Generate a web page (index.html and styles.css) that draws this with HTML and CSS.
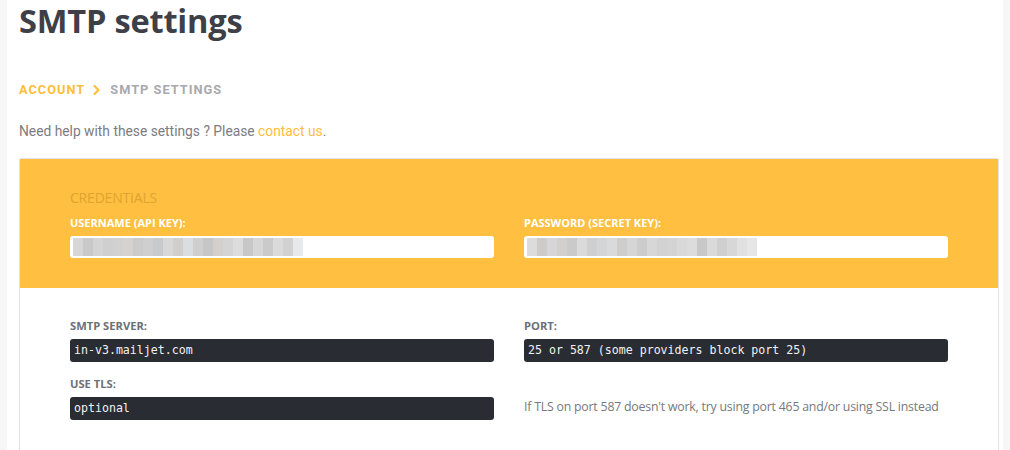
FILE: index.html
```html
<!DOCTYPE html>
<html>
<head>
<meta charset="utf-8">
<link rel="stylesheet" href="styles.css">
</head>
<body>
<div class="page">
  <h1 class="title">SMTP settings</h1>
  <nav class="crumbs">
    <span class="crumb-link">Account</span>
    <svg class="crumb-sep" width="7" height="10" viewBox="0 0 7 10"><polyline points="1.5,1 5.5,5 1.5,9" fill="none" stroke="#ffbd3c" stroke-width="2.2" stroke-linecap="round" stroke-linejoin="round"/></svg>
    <span class="crumb-current">SMTP settings</span>
  </nav>
  <p class="help">Need help with these settings ? Please <span class="link">contact us</span>.</p>
  <section class="card">
    <div class="card-head">
      <div class="section-title">CREDENTIALS</div>
      <div class="grid">
        <div class="field">
          <div class="label label-light">USERNAME (API KEY):</div>
          <div class="input">
            <div class="blur">
              <i style="background:#d6d6d6"></i><i style="background:#c9c9c9"></i><i style="background:#d4d4d4"></i><i style="background:#cfcfcf"></i><i style="background:#d1d1d1"></i><i style="background:#d6d2d0"></i><i style="background:#cbcbcb"></i><i style="background:#cfcfcf"></i><i style="background:#c9cacc"></i><i style="background:#d8d8d8"></i><i style="background:#d2cecb"></i><i style="background:#dadee1"></i><i style="background:#cfcfcf"></i><i style="background:#c6c6c6"></i><i style="background:#d2cfcc"></i><i style="background:#d4d4d4"></i><i style="background:#dcdcdc"></i><i style="background:#c7c7c7"></i><i style="background:#d6d6d6"></i><i style="background:#cacaca"></i><i style="background:#dadada"></i><i style="background:#d3d1cf"></i><i style="background:#e8e9ea"></i>
            </div>
          </div>
        </div>
        <div class="field">
          <div class="label label-light">PASSWORD (SECRET KEY):</div>
          <div class="input">
            <div class="blur">
              <i style="background:#dcdcdc"></i><i style="background:#cdcbca"></i><i style="background:#d6d6d8"></i><i style="background:#d3cfcc"></i><i style="background:#cacaca"></i><i style="background:#dadada"></i><i style="background:#cfcfcf"></i><i style="background:#d3d4d6"></i><i style="background:#d9dadb"></i><i style="background:#cfcdcb"></i><i style="background:#d6d6d6"></i><i style="background:#cccccc"></i><i style="background:#d7d7d7"></i><i style="background:#d2d2d2"></i><i style="background:#d4d4d4"></i><i style="background:#d9d9d9"></i><i style="background:#dcdcdc"></i><i style="background:#c8c8c8"></i><i style="background:#dadada"></i><i style="background:#cfcfcf"></i><i style="background:#d7d7d7"></i><i style="background:#e0e0e0"></i><i style="background:#e6e6e6"></i>
            </div>
          </div>
        </div>
      </div>
    </div>
    <div class="card-body">
      <div class="grid">
        <div class="field">
          <div class="label">SMTP SERVER:</div>
          <div class="code">in-v3.mailjet.com</div>
        </div>
        <div class="field">
          <div class="label">PORT:</div>
          <div class="code">25 or 587 (some providers block port 25)</div>
        </div>
        <div class="field">
          <div class="label">USE TLS:</div>
          <div class="code">optional</div>
        </div>
        <div class="field note-cell">
          <p class="note">If TLS on port 587 doesn't work, try using port 465 and/or using SSL instead</p>
        </div>
      </div>
    </div>
  </section>
</div>
</body>
</html>
```
FILE: styles.css
```css
html, body {
  margin: 0;
  padding: 0;
  background: #f7f7f7;
  height: 100%;
  overflow: hidden;
}
.page {
  margin: 0 7px;
  background: #fff;
  min-height: 100%;
  padding: 0 4px 0 12px;
  box-sizing: border-box;
}
.title {
  margin: 0;
  font-family: "Open Sans", sans-serif;
  font-weight: 700;
  font-size: 32.6px;
  line-height: 42px;
  color: #3e3f47;
  letter-spacing: -0.2px;
}
.crumbs {
  margin-top: 38px;
  font-family: Roboto, sans-serif;
  font-weight: 700;
  font-size: 12.8px;
  letter-spacing: 1px;
  text-transform: uppercase;
  line-height: 20px;
  display: flex;
  align-items: center;
}
.crumb-link { color: #ffbd3c; }
.crumb-sep {
  display: block;
  margin: 0 10px 1px 8px;
}
.crumb-current { color: #a9a9ad; }
.help {
  margin: 22px 0 0;
  font-family: Roboto, sans-serif;
  font-size: 13.8px;
  line-height: 18px;
  color: #7c7c80;
}
.link { color: #ffbd3c; }
.card {
  margin-top: 18px;
  border: 1px solid #dfe2e6;
  border-radius: 2px;
  font-family: "Open Sans", sans-serif;
}
.card-head {
  background: #ffbf40;
  padding: 30px 50px 30px;
}
.section-title {
  font-size: 14px;
  color: #e0a431;
  line-height: 18px;
  letter-spacing: -0.2px;
}
.grid {
  display: grid;
  grid-template-columns: 1fr 1fr;
  column-gap: 30px;
}
.card-head .grid { margin-top: 9px; }
.label {
  font-size: 11px;
  font-weight: 700;
  color: #6c7078;
  line-height: 14px;
  margin-bottom: 6px;
}
.card-body .label { font-size: 11.2px; }
.label-light { color: #fff; }
.input {
  height: 22px;
  background: #fff;
  border-radius: 3px;
  padding: 2px 3px;
  box-sizing: border-box;
  display: flex;
}
.blur {
  display: flex;
  height: 18px;
}
.blur i {
  display: block;
  width: 10px;
  height: 18px;
}
.card-body {
  padding: 31px 50px 40px;
  background: #fff;
}
.card-body .grid { row-gap: 15px; }
.code {
  background: #2a2c33;
  color: #f2f2f2;
  font-family: "DejaVu Sans Mono", monospace;
  font-size: 11.6px;
  line-height: 23px;
  height: 23px;
  padding: 0 4px;
  border-radius: 3px;
}
.note-cell {
  display: flex;
  align-items: flex-end;
}
.note {
  margin: 0 0 5px;
  font-size: 12.3px;
  color: #76787e;
  line-height: 16px;
  letter-spacing: -0.2px;
}
```
